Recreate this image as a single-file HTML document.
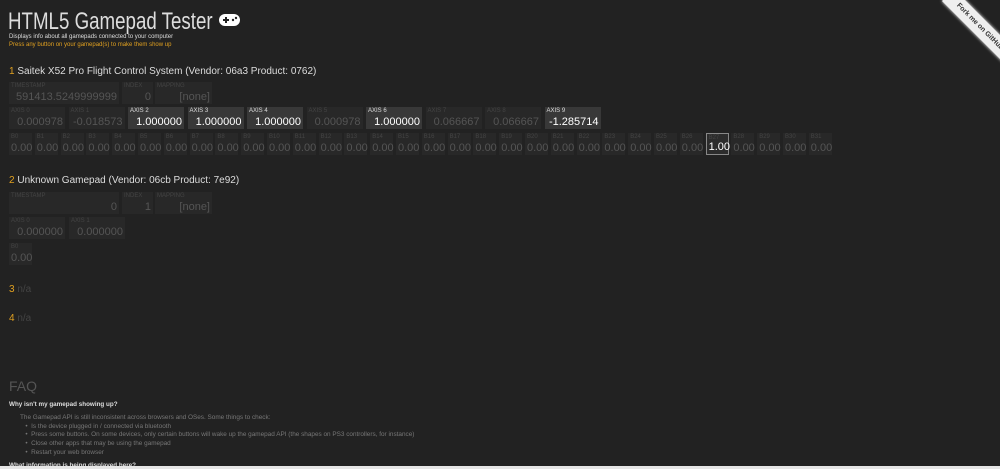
<!DOCTYPE html>
<html><head><meta charset="utf-8"><style>
*{margin:0;padding:0;box-sizing:border-box}
body{width:1000px;height:469px;background:#222;color:#ccc;font-family:"Liberation Sans",sans-serif;position:relative;overflow:hidden}
.a{position:absolute;white-space:nowrap}
.c{position:absolute;background:#282828;color:#555}
.c .l{position:absolute;left:2px;top:1px;font-size:6px;color:#444}
.c .v{position:absolute;right:2px;bottom:1px;font-size:11px}
.c.on{background:#383838;color:#fff}
.c.on .l{color:#ddd}
.b .v{left:2px;right:auto}
.c.pr{background:#2c2c2c;border:1px solid #888;color:#fff}
.y{color:#e0a020}
</style></head><body>
<div class="a" style="left:8px;top:8px;font-size:24px;color:#ddd;transform:scaleX(0.78);transform-origin:0 0">HTML5 Gamepad Tester</div>
<svg class="a" style="left:219px;top:14px" width="21" height="12" viewBox="0 0 21 12"><rect x="0" y="0" width="21" height="12" rx="6" fill="#fff"/><rect x="4" y="5" width="6" height="2" fill="#222"/><rect x="6" y="3" width="2" height="6" fill="#222"/><circle cx="14" cy="6" r="1.2" fill="#222"/><circle cx="17" cy="4" r="1.2" fill="#222"/></svg>
<div class="a" style="left:9px;top:34px;font-size:6px;color:#ddd">Displays info about all gamepads connected to your computer</div>
<div class="a y" style="left:9px;top:42px;font-size:6px">Press any button on your gamepad(s) to make them show up</div>
<div class="a" style="left:954px;top:-11px;width:90px;height:17px;background:#eee;color:#333;font-size:7px;font-weight:bold;text-align:center;line-height:17px;transform:rotate(45deg);transform-origin:0 0;box-shadow:0 0 3px #fff">Fork me on GitHub</div>

<div class="a" style="left:9px;top:66px;font-size:10px;color:#ddd"><span class="y">1</span> Saitek X52 Pro Flight Control System (Vendor: 06a3 Product: 0762)</div>
<div class="c" style="left:9px;top:82px;width:110px;height:22px"><span class="l">TIMESTAMP</span><span class="v">591413.5249999999</span></div>
<div class="c" style="left:122px;top:82px;width:31px;height:22px"><span class="l">INDEX</span><span class="v">0</span></div>
<div class="c" style="left:155px;top:82px;width:57px;height:22px"><span class="l">MAPPING</span><span class="v">[none]</span></div>
<div id="ax"></div>
<div class="a" style="left:9px;top:175px;font-size:10px;color:#ddd"><span class="y">2</span> Unknown Gamepad (Vendor: 06cb Product: 7e92)</div>
<div class="c" style="left:9px;top:192px;width:110px;height:22px"><span class="l">TIMESTAMP</span><span class="v">0</span></div>
<div class="c" style="left:122px;top:192px;width:31px;height:22px"><span class="l">INDEX</span><span class="v">1</span></div>
<div class="c" style="left:155px;top:192px;width:57px;height:22px"><span class="l">MAPPING</span><span class="v">[none]</span></div>
<div class="c" style="left:9px;top:217px;width:56px;height:22px"><span class="l">AXIS 0</span><span class="v">0.000000</span></div>
<div class="c" style="left:69px;top:217px;width:56px;height:22px"><span class="l">AXIS 1</span><span class="v">0.000000</span></div>
<div class="c b" style="left:9px;top:243px;width:23px;height:22px"><span class="l">B0</span><span class="v">0.00</span></div>
<div class="a" style="left:9px;top:284px;font-size:10px;color:#444"><span class="y">3</span> n/a</div>
<div class="a" style="left:9px;top:313px;font-size:10px;color:#444"><span class="y">4</span> n/a</div>
<div class="a" style="left:9px;top:378px;font-size:14px;color:#555">FAQ</div>
<div class="a" style="left:9px;top:401px;font-size:6.3px;font-weight:bold;color:#ddd">Why isn't my gamepad showing up?</div>
<div class="a" style="left:20px;top:414px;font-size:6.4px;color:#777;line-height:8.7px">The Gamepad API is still inconsistent across browsers and OSes. Some things to check:<br>
&nbsp;&nbsp;&nbsp;•&nbsp;&nbsp;Is the device plugged in / connected via bluetooth<br>
&nbsp;&nbsp;&nbsp;•&nbsp;&nbsp;Press some buttons. On some devices, only certain buttons will wake up the gamepad API (the shapes on PS3 controllers, for instance)<br>
&nbsp;&nbsp;&nbsp;•&nbsp;&nbsp;Close other apps that may be using the gamepad<br>
&nbsp;&nbsp;&nbsp;•&nbsp;&nbsp;Restart your web browser</div>
<div class="a" style="left:9px;top:462px;font-size:6.3px;font-weight:bold;color:#ddd">What information is being displayed here?</div>
<div class="a" style="left:0;top:466px;width:1000px;height:3px;background:#e6e6e6"></div>
<script>
var h='';var ax=['0.000978','-0.018573','1.000000','1.000000','1.000000','0.000978','1.000000','0.066667','0.066667','-1.285714'];
var on=[2,3,4,6,9];
for(var i=0;i<10;i++){h+='<div class="c'+(on.indexOf(i)>=0?' on':'')+'" style="left:'+(9+i*59.5)+'px;top:107px;width:56px;height:22px"><span class="l">AXIS '+i+'</span><span class="v">'+ax[i]+'</span></div>';}
for(var j=0;j<32;j++){h+='<div class="c b'+(j==27?' pr':'')+'" style="left:'+(9+j*25.8)+'px;top:133px;width:23px;height:22px"><span class="l">B'+j+'</span><span class="v">'+(j==27?'1.00':'0.00')+'</span></div>';}
document.getElementById('ax').innerHTML=h;
</script>
</body></html>
